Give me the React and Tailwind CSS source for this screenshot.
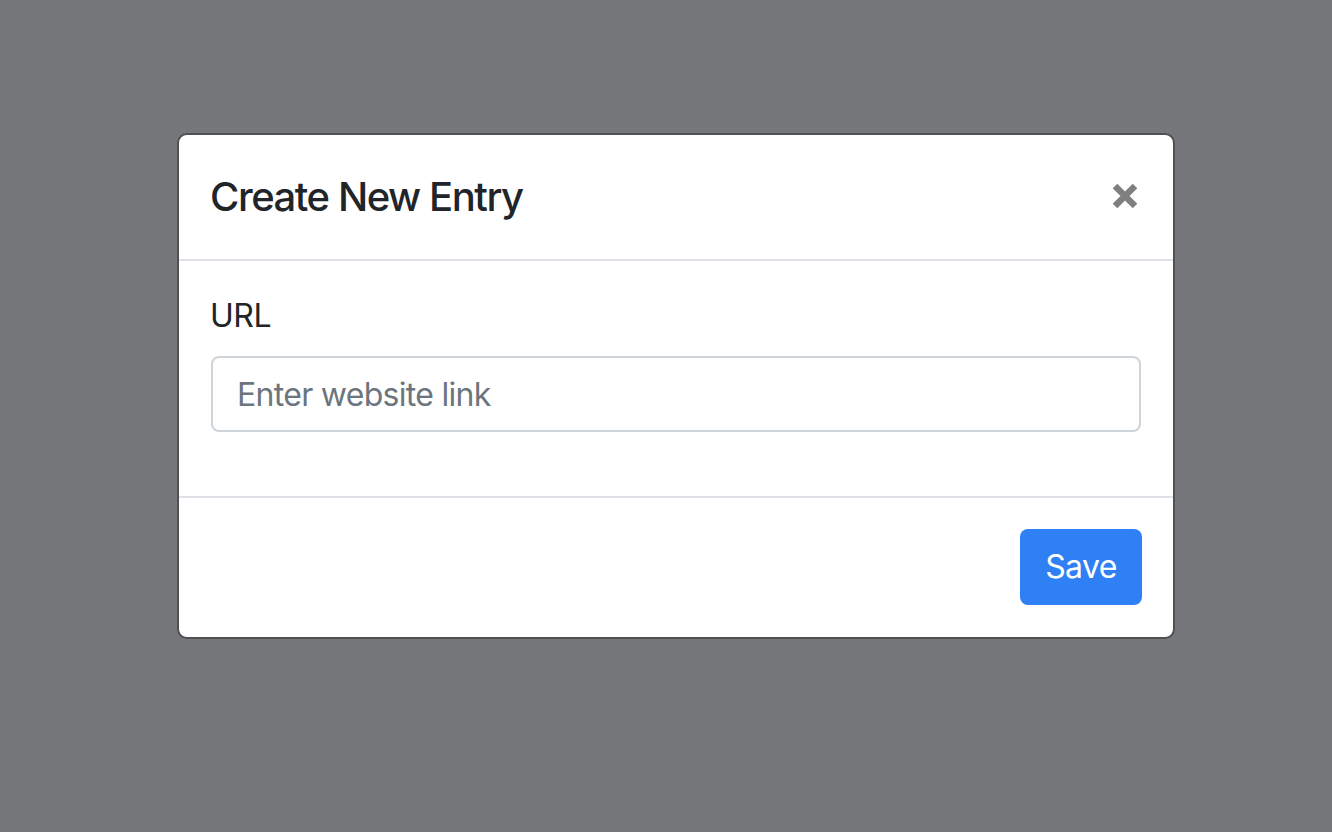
export default function App() {
  return (
    <div
      className="min-h-[832px] w-full bg-[#76777a] flex justify-center pl-[20px] pt-[133px]"
      style={{ fontFamily: 'Inter, "Noto Sans", sans-serif' }}
    >
      <div className="w-[998px] h-[506px] bg-white border-2 border-[#4f5052] rounded-[10px] flex flex-col">
        <div className="flex items-start justify-between px-[32px] pt-[32px] pb-[32px] border-b-2 border-[#dee2e6] h-[126px]">
          <h5 className="text-[40px] leading-[60px] font-medium text-[#212529] tracking-[-1.45px] -ml-[1px]">Create New Entry</h5>
          <button className="mt-[16px] mr-[3px]" aria-label="Close">
            <svg width="26" height="26" viewBox="0 0 26 26">
              <path d="M3 3 L23 23 M23 3 L3 23" stroke="#7f7f7f" strokeWidth="6.5" />
            </svg>
          </button>
        </div>
        <div className="px-[32px] pt-[31px] pb-[32px] h-[235px]">
          <label className="block text-[32px] leading-[48px] text-[#212529] mb-[16px] tracking-[-0.5px] -ml-[1px]">URL</label>
          <input
            className="w-full h-[76px] border-2 border-[#ced4da] rounded-[8px] px-[24px] text-[32px] tracking-[-0.7px] text-[#495057] placeholder:text-[#6c757d] outline-none"
            placeholder="Enter website link"
          />
        </div>
        <div className="flex-1 border-t-2 border-[#dee2e6] flex items-start justify-end px-[31px] pt-[31px]">
          <button className="w-[122px] h-[76px] rounded-[8px] bg-[#2f7ff5] text-white text-[32px] tracking-[-0.6px]">Save</button>
        </div>
      </div>
    </div>
  );
}
